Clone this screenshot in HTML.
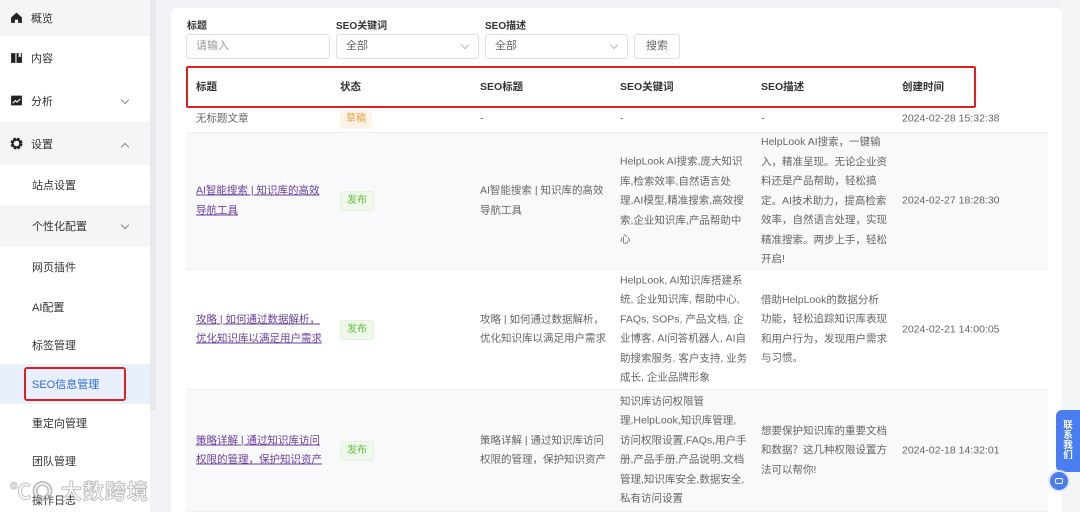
<!DOCTYPE html>
<html><head><meta charset="utf-8"><style>
*{margin:0;padding:0;box-sizing:border-box}
html,body{width:1080px;height:512px;overflow:hidden}
body{background:#f0f2f5;font-family:"Liberation Sans","Noto Sans CJK SC",sans-serif;position:relative;color:#555}
.sb{position:absolute;left:0;top:0;width:150px;height:512px;background:#fff}
.sbar{position:absolute;left:150px;top:0;width:6px;height:410px;background:#e6e8eb}
.it{position:absolute;left:0;width:150px;font-size:11px;color:#333;display:flex;align-items:center}
.it .ic{position:absolute;left:10px;top:50%;margin-top:-7px}
.it .t{position:absolute;left:31px}
.it .s{position:absolute;left:32px}
.chev{position:absolute;left:122px;width:6px;height:6px;border-right:1px solid #888;border-bottom:1px solid #888}
.card{position:absolute;left:171px;top:8px;width:891px;height:504px;background:#fff;border-radius:6px 6px 0 0}
.rs{position:absolute;left:1062px;top:0;width:18px;height:512px;background:#f4f5f7}
.lbl{position:absolute;top:17px;font-size:10px;font-weight:bold;color:#333}
.inp{position:absolute;top:34px;height:25px;border:1px solid #dcdfe6;border-radius:3px;font-size:11px;color:#999;padding-left:9px;line-height:23px;background:#fff}
.inp.s{color:#666}
.inp .dn{position:absolute;right:10px;top:7px;width:6px;height:6px;border-right:1px solid #bbb;border-bottom:1px solid #bbb;transform:rotate(45deg)}
.row{position:absolute;left:186px;width:862px;font-size:10.5px;line-height:19.5px;color:#666;border-bottom:1px solid #eef0f3;white-space:nowrap}
.row .c{position:absolute;top:50%;transform:translateY(-50%)}
.g{background:#f9f9fb}
.lk{color:#6b3fa0;text-decoration:underline}
.tag{display:inline-block;font-size:10px;padding:0 6px;line-height:18px;border-radius:3px}
.tg{background:#eef9ec;color:#67c23a;border:1px solid #e1f3d8}
.to{background:#fdf3e6;color:#e6a23c}
.hd{position:absolute;left:186px;top:66px;width:790px;height:42px;border:2px solid #e02020;border-radius:2px;font-size:10.5px;font-weight:bold;color:#333}
.hd span{position:absolute;top:11px}
</style></head><body>
<div class="sb">
 <div class="it" style="top:0;height:36px;background:#f4f5f7"><span class="ic"><svg width="13" height="13" viewBox="0 0 12 12"><path d="M1 6L6 1.5 11 6V11H7.5V8H4.5V11H1Z" fill="#222"/></svg></span><span class="t">概览</span></div>
 <div class="it" style="top:36px;height:44px"><span class="ic"><svg width="13" height="13" viewBox="0 0 12 12"><path d="M1 2h4v9H1zM6 2h5v9H6z" fill="#222"/><path d="M8 2v4l1-1 1 1V2" fill="#fff"/></svg></span><span class="t">内容</span></div>
 <div class="it" style="top:80px;height:42px"><span class="ic"><svg width="13" height="13" viewBox="0 0 12 12"><rect x="1" y="1.5" width="10" height="9" fill="#222"/><path d="M2.5 8.5l2.5-2.5 1.5 1.5 3-3" stroke="#fff" stroke-width="1" fill="none"/></svg></span><span class="t">分析</span><span class="chev" style="top:17px;transform:rotate(45deg)"></span></div>
 <div class="it" style="top:122px;height:43px;background:#f4f5f7"><span class="ic"><svg width="13" height="13" viewBox="0 0 12 12"><circle cx="6" cy="6" r="4" fill="none" stroke="#222" stroke-width="3" stroke-dasharray="2.2 1"/><circle cx="6" cy="6" r="3.6" fill="none" stroke="#222" stroke-width="1.6"/></svg></span><span class="t">设置</span><span class="chev" style="top:22px;transform:rotate(-135deg)"></span></div>
 <div class="it" style="top:165px;height:40px"><span class="s">站点设置</span></div>
 <div class="it" style="top:205px;height:42px;background:#f4f5f7"><span class="s">个性化配置</span><span class="chev" style="top:17px;transform:rotate(45deg)"></span></div>
 <div class="it" style="top:247px;height:40px"><span class="s">网页插件</span></div>
 <div class="it" style="top:287px;height:39px"><span class="s">AI配置</span></div>
 <div class="it" style="top:326px;height:38px"><span class="s">标签管理</span></div>
 <div class="it" style="top:364px;height:40px;background:#e9f0fd;color:#2f6be6"><span class="s">SEO信息管理</span></div>
 <div style="position:absolute;left:24px;top:367px;width:102px;height:34px;border:2px solid #e02020;border-radius:3px"></div>
 <div class="it" style="top:404px;height:37px"><span class="s">重定向管理</span></div>
 <div class="it" style="top:441px;height:39px"><span class="s">团队管理</span></div>
 <div class="it" style="top:480px;height:40px"><span class="s">操作日志</span></div>
 <div style="position:absolute;left:10px;top:476px;font-size:21px;font-weight:bold;color:rgba(255,255,255,0.75);-webkit-text-stroke:1px rgba(150,150,150,0.6);letter-spacing:1px">℃◎ 大数跨境</div>
</div>
<div class="sbar"></div>
<div class="rs"></div>
<div class="card"></div>
<div class="lbl" style="left:187px">标题</div>
<div class="lbl" style="left:336px">SEO关键词</div>
<div class="lbl" style="left:485px">SEO描述</div>
<div class="inp" style="left:186px;width:144px">请输入</div>
<div class="inp s" style="left:336px;width:143px">全部<span class="dn"></span></div>
<div class="inp s" style="left:485px;width:143px">全部<span class="dn"></span></div>
<div class="inp s" style="left:634px;width:46px;padding-left:11px;color:#666">搜索</div>
<div class="hd"><span style="left:8px">标题</span><span style="left:152px">状态</span><span style="left:292px">SEO标题</span><span style="left:432px">SEO关键词</span><span style="left:573px">SEO描述</span><span style="left:714px">创建时间</span></div>

<div class="row" style="top:106px;height:27px">
 <span class="c" style="left:10px">无标题文章</span><span class="c" style="left:154px"><span class="tag to">草稿</span></span><span class="c" style="left:294px">-</span><span class="c" style="left:434px">-</span><span class="c" style="left:575px">-</span><span class="c" style="left:716px">2024-02-28 15:32:38</span>
</div>
<div class="row g" style="top:133px;height:137px">
 <span class="c lk" style="left:10px">AI智能搜索 | 知识库的高效<br>导航工具</span><span class="c" style="left:154px"><span class="tag tg">发布</span></span><span class="c" style="left:294px">AI智能搜索 | 知识库的高效<br>导航工具</span><span class="c" style="left:434px">HelpLook AI搜索,庞大知识<br>库,检索效率,自然语言处<br>理,AI模型,精准搜索,高效搜<br>索,企业知识库,产品帮助中<br>心</span><span class="c" style="left:575px">HelpLook AI搜索，一键输<br>入，精准呈现。无论企业资<br>料还是产品帮助，轻松搞<br>定。AI技术助力，提高检索<br>效率，自然语言处理，实现<br>精准搜索。两步上手，轻松<br>开启!</span><span class="c" style="left:716px">2024-02-27 18:28:30</span>
</div>
<div class="row" style="top:270px;height:120px">
 <span class="c lk" style="left:10px">攻略 | 如何通过数据解析，<br>优化知识库以满足用户需求</span><span class="c" style="left:154px"><span class="tag tg">发布</span></span><span class="c" style="left:294px">攻略 | 如何通过数据解析，<br>优化知识库以满足用户需求</span><span class="c" style="left:434px">HelpLook, AI知识库搭建系<br>统, 企业知识库, 帮助中心,<br>FAQs, SOPs, 产品文档, 企<br>业博客, AI问答机器人, AI自<br>助搜索服务, 客户支持, 业务<br>成长, 企业品牌形象</span><span class="c" style="left:575px">借助HelpLook的数据分析<br>功能，轻松追踪知识库表现<br>和用户行为，发现用户需求<br>与习惯。</span><span class="c" style="left:716px">2024-02-21 14:00:05</span>
</div>
<div class="row g" style="top:390px;height:122px">
 <span class="c lk" style="left:10px">策略详解 | 通过知识库访问<br>权限的管理，保护知识资产</span><span class="c" style="left:154px"><span class="tag tg">发布</span></span><span class="c" style="left:294px">策略详解 | 通过知识库访问<br>权限的管理，保护知识资产</span><span class="c" style="left:434px">知识库访问权限管<br>理,HelpLook,知识库管理,<br>访问权限设置,FAQs,用户手<br>册,产品手册,产品说明,文档<br>管理,知识库安全,数据安全,<br>私有访问设置</span><span class="c" style="left:575px">想要保护知识库的重要文档<br>和数据？这几种权限设置方<br>法可以帮你!</span><span class="c" style="left:716px">2024-02-18 14:32:01</span>
</div>
<div style="position:absolute;left:1056px;top:410px;width:24px;height:62px;background:#4a7df0;border-radius:6px 0 0 6px;color:#fff;font-size:9.5px;line-height:10px;font-weight:bold;display:flex;align-items:center;justify-content:center;text-align:center">联<br>系<br>我<br>们</div>
<div style="position:absolute;left:1048px;top:470px;width:22px;height:22px;border-radius:50%;background:#4a7df0;border:2px solid #dfe7fb"><div style="position:absolute;left:5px;top:6px;width:8px;height:6px;border:1.5px solid #fff;border-radius:2px"></div></div>
</body></html>
